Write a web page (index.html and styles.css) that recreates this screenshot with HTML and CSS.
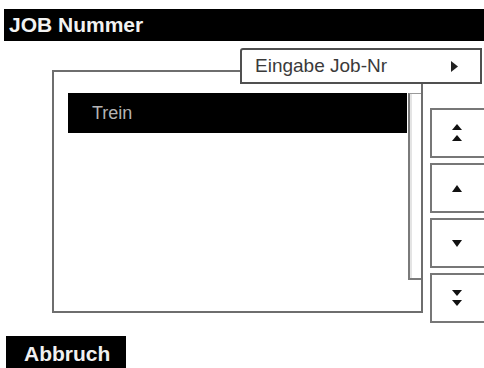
FILE: index.html
```html
<!DOCTYPE html>
<html>
<head>
<meta charset="utf-8">
<link rel="stylesheet" href="styles.css">
</head>
<body>
<div class="titlebar">JOB Nummer</div>
<div class="main">
  <div class="listbox">
    <div class="list-area">
      <div class="item selected">Trein</div>
    </div>
    <div class="scrollbar"></div>
  </div>
  <div class="nav">
    <div class="navbtn">
      <svg width="12" height="18" viewBox="0 0 12 18"><polygon points="1,6 11,6 6,0" fill="#111"/><polygon points="1,17 11,17 6,11" fill="#111"/></svg>
    </div>
    <div class="navbtn">
      <svg width="12" height="7" viewBox="0 0 12 7"><polygon points="1,7 11,7 6,0" fill="#111"/></svg>
    </div>
    <div class="navbtn">
      <svg width="12" height="7" viewBox="0 0 12 7"><polygon points="1,0 11,0 6,7" fill="#111"/></svg>
    </div>
    <div class="navbtn">
      <svg width="12" height="18" viewBox="0 0 12 18"><polygon points="1,1 11,1 6,7" fill="#111"/><polygon points="1,11 11,11 6,17" fill="#111"/></svg>
    </div>
  </div>
</div>
<div class="footer">
  <div class="cancel">Abbruch</div>
</div>
<div class="menu">
  <span class="menu-label">Eingabe Job-Nr</span>
  <svg class="menu-arrow" width="7" height="11" viewBox="0 0 7 11"><polygon points="0,0 7,5.5 0,11" fill="#222"/></svg>
</div>
</body>
</html>
```
FILE: styles.css
```css
html, body {
  margin: 0;
  padding: 0;
  width: 484px;
  height: 368px;
  overflow: hidden;
  background: #fff;
  font-family: "Liberation Sans", Arial, sans-serif;
}

.titlebar {
  margin: 9px 0 0 4px;
  height: 32px;
  background: #000;
  color: #f2f2f2;
  font-weight: bold;
  font-size: 21px;
  line-height: 32px;
  padding-left: 5px;
}

.main {
  display: flex;
  align-items: flex-start;
  margin-top: 29px;
  padding-left: 52px;
}

.listbox {
  flex-shrink: 0;
  box-sizing: border-box;
  width: 371px;
  height: 243px;
  border: 2px solid #6e6e6e;
  display: flex;
  align-items: flex-start;
}

.list-area {
  flex: 1;
  padding: 21px 1px 0 14px;
}

.item {
  height: 40px;
  line-height: 40px;
  font-size: 18px;
  padding-left: 24px;
}

.item.selected {
  background: #000;
  color: #b4b4b4;
}

.scrollbar {
  flex-shrink: 0;
  box-sizing: border-box;
  width: 13px;
  height: 187px;
  margin-top: 21px;
  border-left: 2px solid #7a7a7a;
  border-top: 1px solid #9a9a9a;
  border-bottom: 2px solid #7a7a7a;
  box-shadow: inset 2px 0 0 #e4e4e4;
}

.nav {
  flex-shrink: 0;
  display: flex;
  flex-direction: column;
  gap: 5px;
  margin-left: 7px;
  margin-top: 38px;
}

.navbtn {
  box-sizing: border-box;
  width: 58px;
  height: 50px;
  border: 2px solid #777;
  background: #fff;
  display: flex;
  align-items: center;
  justify-content: center;
  padding-right: 4px;
}

.footer {
  margin-top: 13px;
  padding-left: 6px;
}

.cancel {
  display: inline-block;
  width: 120px;
  height: 36px;
  box-sizing: border-box;
  background: #000;
  color: #f0f0f0;
  font-weight: bold;
  font-size: 21px;
  line-height: 36px;
  padding-left: 18px;
}

.menu {
  position: absolute;
  left: 240px;
  top: 48px;
  width: 242px;
  height: 36px;
  box-sizing: border-box;
  border: 2px solid #505050;
  border-radius: 3px 0 0 0;
  background: #fff;
  display: flex;
  align-items: center;
  padding-left: 13px;
}

.menu-label {
  flex: 1;
  font-size: 19px;
  color: #3a3a3a;
}

.menu-arrow {
  margin-right: 22px;
}
```
